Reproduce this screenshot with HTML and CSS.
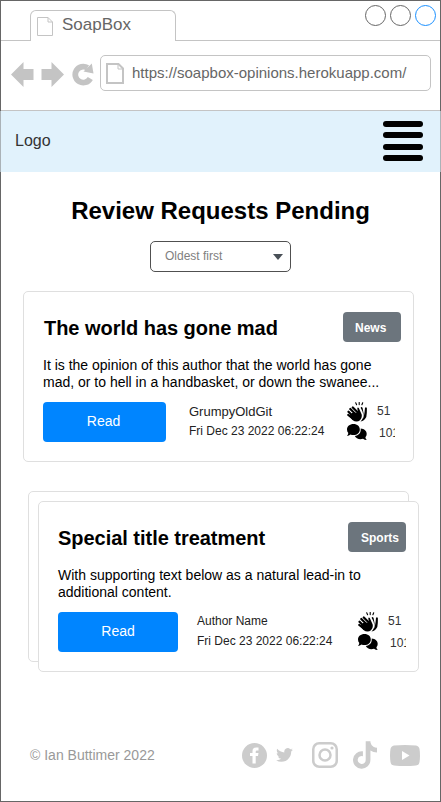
FILE: index.html
```html
<!DOCTYPE html>
<html lang="en">
<head>
<meta charset="utf-8">
<title>SoapBox</title>
<link rel="stylesheet" href="styles.css">
</head>
<body>
<svg class="defs" width="0" height="0">
  <symbol id="clap" viewBox="0 0 20 20">
    <g fill="none" stroke="#000" stroke-linecap="round">
      <path stroke-width="1.1" d="M8.700 .8l.9 1.900M12.200.4v2.200M15.700 .8L14.900 2.700"/>
      <path stroke-width="2.200" d="M5.800 5.500l5 5M3.300 7l6 6M1.500 9.700l6 6M1.300 13l5 4"/>
    </g>
    <path d="M5 11L11 10.500 10.300 6.500Q10.500 5 11.800 6L14.700 12.500Q15.300 16 13 18.300Q9.500 21 5.500 18L2.500 14.500z"/>
    <path d="M13.600 5.800Q14.600 4 15.600 6L16.500 11Q17 16 13.500 19.600Q17.700 18.500 19.300 15Q20 12 19.900 6.200Q19.300 4.500 18 5.800L17.600 10Q17 14.500 16 16.500Q17 12 15.300 9z"/>
  </symbol>
  <symbol id="comments" viewBox="0 0 20 16">
    <path d="M6.500 0C10.200 0 12.800 2.300 12.800 5.400S10.200 11 6.500 11Q4.800 11 3.500 10.400Q2 11.800 0 12Q1.200 10.500 1.300 8.900Q0 7.500 0 5.400C0 2.300 2.800 0 6.500 0z"/>
    <path d="M13.700 4.500C17.300 4.700 19.700 7 19.700 9.900Q19.700 11.800 18.400 13.200Q18.500 14.800 19.800 16Q17.600 16 16 14.800C12.500 15.900 9 14.700 7.800 12C11.500 11.500 14.200 8.800 13.700 4.500z"/>
  </symbol>
</svg>
<div class="window">
  <div class="tabs">
    <div class="tab">
      <svg class="tab-page" width="16" height="19" viewBox="0 0 16 19"><path d="M.5.5H11L15.500 5V18.500H.5zM11 .5V5H15.500" fill="none" stroke="#c4c4c4"/></svg>
      <span>SoapBox</span>
    </div>
    <div class="controls"><i></i><i></i><i class="active"></i></div>
  </div>
  <div class="toolbar">
    <svg class="arrow" width="23" height="25" viewBox="0 0 23 25"><path d="M0 12.500L12.500 0V7H22.500V18H12.500V25z"/></svg>
    <svg class="arrow" width="23" height="25" viewBox="0 0 23 25"><path d="M23 12.500L10.500 0V7H.5V18H10.500V25z"/></svg>
    <svg class="reload" width="23" height="23" viewBox="0 0 23 23"><path d="M18.300 15.500A8 8 0 1 1 15.500 4.800" fill="none" stroke="#c4c4c4" stroke-width="5.800"/><path d="M19.800 .5L21.500 10.500L11.500 8.500z" fill="#c4c4c4"/></svg>
    <div class="address">
      <svg width="18" height="21" viewBox="0 0 18 21"><path d="M1 1H12.500L17 5.500V20H1z" fill="none" stroke="#c4c4c4" stroke-width="2"/><path d="M12 1V6H17" fill="none" stroke="#c4c4c4"/></svg>
      <span>https://soapbox-opinions.herokuapp.com/</span>
    </div>
  </div>
  <nav class="navbar">
    <span>Logo</span>
    <div class="menu"><i></i><i></i><i></i><i></i></div>
  </nav>
  <main>
    <h1>Review Requests Pending</h1>
    <div class="select"><span>Oldest first</span><svg width="10" height="6" viewBox="0 0 10 6"><path d="M0 0H10L5 6z" fill="#495057"/></svg></div>
    <article class="card">
      <header><h2>The world has gone mad</h2><span class="badge">News</span></header>
      <p>It is the opinion of this author that the world has gone mad, or to hell in a handbasket, or down the swanee...</p>
      <div class="row">
        <div class="read">Read</div>
        <div class="meta"><span class="name">GrumpyOldGit</span><span>Fri Dec 23 2022 06:22:24</span></div>
        <div class="icons"><svg class="clap"><use href="#clap"/></svg><svg class="comments"><use href="#comments"/></svg></div>
        <div class="counts"><span>51</span><span class="clip">101</span></div>
      </div>
    </article>
    <div class="stack">
      <article class="card second">
        <header><h2>Special title treatment</h2><span class="badge">Sports</span></header>
        <p>With supporting text below as a natural lead-in to additional content.</p>
        <div class="row">
          <div class="read">Read</div>
          <div class="meta"><span class="name">Author Name</span><span>Fri Dec 23 2022 06:22:24</span></div>
          <div class="icons"><svg class="clap"><use href="#clap"/></svg><svg class="comments"><use href="#comments"/></svg></div>
          <div class="counts"><span>51</span><span class="clip">101</span></div>
        </div>
      </article>
    </div>
  </main>
  <footer>
    <span class="copy">© Ian Buttimer 2022</span>
    <svg class="fb" width="25" height="25" viewBox="0 0 25 25"><circle cx="12.500" cy="12.500" r="12.500"/><path fill="#fff" d="M10.500 20.500V13H8V10H10.500V8Q10.500 4.500 14 4.500H16.500V7.500H15Q13.700 7.500 13.700 8.800V10H16.500L16 13H13.700V20.500z"/></svg>
    <svg class="tw" width="17" height="14" viewBox="0 2 24 20"><path d="M23.950 4.570a10 10 0 0 1-2.820.77 4.960 4.960 0 0 0 2.160-2.720c-.95.550-2 .960-3.120 1.180a4.920 4.920 0 0 0-8.380 4.480C7.690 8.090 4.070 6.130 1.640 3.160a4.820 4.820 0 0 0-.67 2.480c0 1.710.87 3.210 2.190 4.100a4.900 4.900 0 0 1-2.230-.62v.06a4.920 4.920 0 0 0 3.950 4.830 5 5 0 0 1-2.210.08 4.940 4.940 0 0 0 4.600 3.420A9.870 9.870 0 0 1 0 19.540a13.990 13.990 0 0 0 7.550 2.210c9.050 0 14-7.500 14-13.980 0-.21 0-.42-.02-.63a9.940 9.940 0 0 0 2.420-2.570z"/></svg>
    <svg class="ig" width="26" height="26" viewBox="0 0 26 26"><rect x="1.250" y="1.250" width="23.500" height="23.500" rx="6" fill="none" stroke="#ccc" stroke-width="2.500"/><circle cx="13" cy="13" r="5.500" fill="none" stroke="#ccc" stroke-width="2.500"/><circle cx="20" cy="6" r="1.600"/></svg>
    <svg class="tt" width="24" height="28" viewBox="0 0 448 512"><path d="M448 209.910a210.060 210.060 0 0 1-122.770-39.250v178.720A162.550 162.550 0 1 1 185 188.310v89.890a74.620 74.620 0 1 0 52.230 71.180V0h88a121.180 121.180 0 0 0 1.860 22.170A122.180 122.180 0 0 0 381 102.390a121.430 121.430 0 0 0 67 20.140z"/></svg>
    <svg class="yt" width="30" height="21" viewBox="0 0 30 21"><path d="M4 .5Q15-.5 26 .5Q29 1 29.500 4Q30.500 10.500 29.500 17Q29 20 26 20.500Q15 21.500 4 20.500Q1 20 .5 17Q-.5 10.500 .5 4Q1 1 4 .5z"/><path fill="#fff" d="M12 6L19.500 10.500L12 15z"/></svg>
  </footer>
</div>
</body>
</html>
```
FILE: styles.css
```css
* { box-sizing: border-box; }
body { margin: 0; font-family: "Liberation Sans", Arial, sans-serif; color: #000; background: #fff; }
svg { display: block; flex: none; }
.defs { position: absolute; }
h1, h2, p { margin: 0; }
.window { width: 441px; height: 802px; border: 1px solid #666; display: flex; flex-direction: column; }

.tabs { height: 40px; flex: none; border-bottom: 1px solid #c4c4c4; display: flex; justify-content: space-between; padding: 9px 4px 0 29px; }
.tab { width: 146px; height: 31px; border: 1px solid #c4c4c4; border-bottom: 0; border-radius: 6px 6px 0 0; background: #fff; display: flex; padding: 6px 0 0 6px; color: #666; font-size: 17px; line-height: 17px; }
.tab span { margin: -1px 0 0 9px; }
.controls { display: flex; gap: 4px; margin-top: -5px; }
.controls i { width: 21px; height: 21px; border: 1px solid #666; border-radius: 50%; }
.controls .active { border-color: #1a90ff; }

.toolbar { height: 70px; flex: none; border-bottom: 1px solid #c4c4c4; display: flex; align-items: flex-start; padding: 14px 9px 0 10px; }
.arrow { fill: #c4c4c4; margin: 7px 7px 0 0; }
.reload { margin: 8px 5px 0 1px; }
.address { width: 332px; height: 36px; border: 1px solid #c4c4c4; border-radius: 5px; display: flex; align-items: center; padding-left: 5px; color: #666; font-size: 15px; line-height: 17px; }
.address span { margin: -1px 0 0 8px; }

.navbar { height: 61px; flex: none; margin: 0 -1px; background: #e1f2fc; border: solid #aab2b7; border-width: 0 1px; display: flex; justify-content: space-between; padding: 9px 17px 0 14px; font-size: 16px; color: #333; }
.navbar span { margin-top: 12px; }
.menu { display: flex; flex-direction: column; gap: 5.500px; padding-top: .5px; }
.menu i { width: 40px; height: 6px; border-radius: 3px; background: #000; }

h1 { font-size: 24px; line-height: 28px; text-align: center; margin-top: 25px; }
.select { width: 141px; height: 31px; margin: 16px 0 0 149px; border: 1px solid #505050; border-radius: 5px; display: flex; align-items: center; justify-content: space-between; padding: 0 7px 0 14px; font-size: 12px; color: #808080; }
.select span { margin-top: -2px; }

.card { width: 391px; height: 171px; margin: 19px 0 0 22px; border: 1px solid #dfdfdf; border-radius: 5px; background: #fff; padding: 20px 12px 0 19px; }
.card header { display: flex; justify-content: space-between; }
h2 { font-size: 20px; line-height: 23px; margin: 5px 0 0 1px; letter-spacing: -.03px; }
.badge { width: 58px; height: 30px; border-radius: 4px; background: #6c757d; color: #fff; font-weight: bold; font-size: 12px; line-height: 32px; padding-left: 12px; }
.card p { font-size: 14px; line-height: 17px; margin-top: 15px; width: 350px; }
.row { display: flex; align-items: flex-start; margin-top: 11px; font-size: 12px; line-height: 14px; }
.read { width: 123px; height: 40px; border-radius: 4px; background: #0085ff; color: #fff; font-size: 14px; line-height: 38px; text-align: center; padding-right: 2px; }
.meta { width: 135px; margin-left: 23px; padding-top: 3px; display: flex; flex-direction: column; gap: 5px; white-space: nowrap; color: #222; }
.name { font-size: 13px; }
.icons { margin-left: 23px; }
.clap { width: 20px; height: 20px; }
.comments { width: 20px; height: 16px; margin-top: 2px; }
.counts { margin-left: 10px; padding-top: 2px; color: #333; display: flex; flex-direction: column; gap: 8px; }
.clip { width: 16px; margin-left: 2px; overflow: hidden; }

.stack { width: 381px; height: 171px; margin: 29px 0 0 27px; border: 1px solid #dfdfdf; border-radius: 5px; }
.second { position: relative; width: 381px; margin: 9px 0 0 9px; }
.second h2 { margin-left: 0; }
.second .badge { padding-left: 13px; }
.second .read { width: 120px; padding-right: 0; }
.second .meta { margin-left: 19px; padding-top: 2px; gap: 6px; }
.second .name { font-size: 12px; }
.second .icons { margin-left: 26px; }

footer { display: flex; align-items: center; margin-top: 78px; height: 30px; padding-left: 29px; fill: #ccc; font-size: 14px; color: #999; }
.copy { width: 212px; }
.tw { margin-left: 9px; }
.ig { margin-left: 19px; }
.tt { margin-left: 15px; }
.yt { margin-left: 13px; }
```
